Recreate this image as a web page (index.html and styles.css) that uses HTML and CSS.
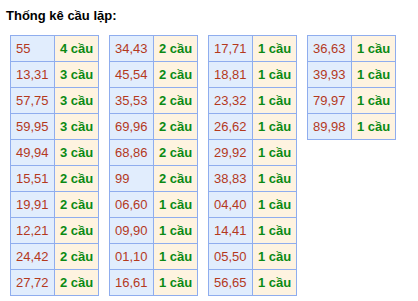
FILE: index.html
```html
<!DOCTYPE html>
<html>
<head>
<meta charset="utf-8">
<link rel="stylesheet" href="styles.css">
</head>
<body>
<div class="title">Thống kê cầu lặp:</div>
<div class="tables">
  <table class="tk">
    <tr><td class="num">55</td><td class="cnt">4 cầu</td></tr>
    <tr><td class="num">13,31</td><td class="cnt">3 cầu</td></tr>
    <tr><td class="num">57,75</td><td class="cnt">3 cầu</td></tr>
    <tr><td class="num">59,95</td><td class="cnt">3 cầu</td></tr>
    <tr><td class="num">49,94</td><td class="cnt">3 cầu</td></tr>
    <tr><td class="num">15,51</td><td class="cnt">2 cầu</td></tr>
    <tr><td class="num">19,91</td><td class="cnt">2 cầu</td></tr>
    <tr><td class="num">12,21</td><td class="cnt">2 cầu</td></tr>
    <tr><td class="num">24,42</td><td class="cnt">2 cầu</td></tr>
    <tr><td class="num">27,72</td><td class="cnt">2 cầu</td></tr>
  </table>
  <table class="tk">
    <tr><td class="num">34,43</td><td class="cnt">2 cầu</td></tr>
    <tr><td class="num">45,54</td><td class="cnt">2 cầu</td></tr>
    <tr><td class="num">35,53</td><td class="cnt">2 cầu</td></tr>
    <tr><td class="num">69,96</td><td class="cnt">2 cầu</td></tr>
    <tr><td class="num">68,86</td><td class="cnt">2 cầu</td></tr>
    <tr><td class="num">99</td><td class="cnt">2 cầu</td></tr>
    <tr><td class="num">06,60</td><td class="cnt">1 cầu</td></tr>
    <tr><td class="num">09,90</td><td class="cnt">1 cầu</td></tr>
    <tr><td class="num">01,10</td><td class="cnt">1 cầu</td></tr>
    <tr><td class="num">16,61</td><td class="cnt">1 cầu</td></tr>
  </table>
  <table class="tk">
    <tr><td class="num">17,71</td><td class="cnt">1 cầu</td></tr>
    <tr><td class="num">18,81</td><td class="cnt">1 cầu</td></tr>
    <tr><td class="num">23,32</td><td class="cnt">1 cầu</td></tr>
    <tr><td class="num">26,62</td><td class="cnt">1 cầu</td></tr>
    <tr><td class="num">29,92</td><td class="cnt">1 cầu</td></tr>
    <tr><td class="num">38,83</td><td class="cnt">1 cầu</td></tr>
    <tr><td class="num">04,40</td><td class="cnt">1 cầu</td></tr>
    <tr><td class="num">14,41</td><td class="cnt">1 cầu</td></tr>
    <tr><td class="num">05,50</td><td class="cnt">1 cầu</td></tr>
    <tr><td class="num">56,65</td><td class="cnt">1 cầu</td></tr>
  </table>
  <table class="tk">
    <tr><td class="num">36,63</td><td class="cnt">1 cầu</td></tr>
    <tr><td class="num">39,93</td><td class="cnt">1 cầu</td></tr>
    <tr><td class="num">79,97</td><td class="cnt">1 cầu</td></tr>
    <tr><td class="num">89,98</td><td class="cnt">1 cầu</td></tr>
  </table>
</div>
</body>
</html>
```
FILE: styles.css
```css
body {
  margin: 0;
  padding: 8px 6px 0 10px;
  font-family: "Liberation Sans", Arial, sans-serif;
  background: #fff;
}
.title {
  font-size: 13px;
  font-weight: bold;
  color: #000;
  line-height: 16px;
  margin-left: -4px;
  margin-bottom: 11px;
}
.tables {
  display: flex;
  align-items: flex-start;
  gap: 10px;
}
.tk {
  border-collapse: collapse;
  table-layout: fixed;
  width: 89px;
}
.tk td {
  border: 1px solid #8fadee;
  height: 26px;
  width: 50%;
  padding: 0 0 0 5px;
  box-sizing: border-box;
  font-size: 13px;
  line-height: 15px;
  white-space: nowrap;
}
.tk td.num {
  background: #e1edfd;
  color: #b4391d;
}
.tk td.cnt {
  background: #fef3e0;
  color: #0b8a14;
  font-weight: bold;
}
```
